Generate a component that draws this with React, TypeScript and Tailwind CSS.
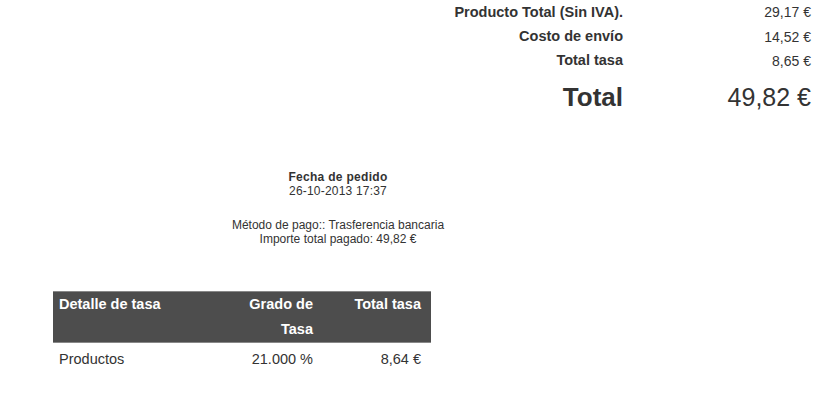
export default function App() {
  return (
    <div
      className="w-[827px] h-[400px] bg-white text-[#333] overflow-hidden"
      style={{ fontFamily: '"Liberation Sans", Arial, sans-serif' }}
    >
      <div className="flex justify-end pr-[16px]">
        <table className="border-collapse">
          <tbody>
            <tr className="h-[25px]">
              <td className="text-right font-bold text-[14.5px] pr-0">Producto Total (Sin IVA).</td>
              <td className="text-right text-[14px] w-[188px]">29,17 €</td>
            </tr>
            <tr className="h-[24px]">
              <td className="text-right font-bold text-[14.5px]">Costo de envío</td>
              <td className="text-right text-[14px]">14,52 €</td>
            </tr>
            <tr className="h-[24px]">
              <td className="text-right font-bold text-[14.5px]">Total tasa</td>
              <td className="text-right text-[14px]">8,65 €</td>
            </tr>
            <tr className="h-[49px]">
              <td className="text-right font-bold text-[26px]">Total</td>
              <td className="text-right text-[25px]">49,82 €</td>
            </tr>
          </tbody>
        </table>
      </div>

      <div className="w-[676px] flex flex-col items-center mt-[48px] text-[12px] leading-[14px]">
        <div className="font-bold tracking-[0.3px]">Fecha de pedido</div>
        <div className="tracking-[0.2px]">26-10-2013 17:37</div>
        <div className="mt-[20px]">Método de pago:: Trasferencia bancaria</div>
        <div>Importe total pagado: 49,82 €</div>
      </div>

      <div className="ml-[53px] mt-[45px] w-[378px]">
        <table className="w-full border-collapse text-[14.5px]">
          <thead>
            <tr className="bg-[#4d4d4d] text-white align-top border-y border-[#888]">
              <th className="text-left pl-[6px] leading-[25px] font-bold">Detalle de tasa</th>
              <th className="text-right w-[90px] leading-[25px] font-bold">
                Grado de<br />Tasa
              </th>
              <th className="text-right w-[118px] pr-[10px] leading-[25px] font-bold">Total tasa</th>
            </tr>
          </thead>
          <tbody>
            <tr className="h-[34px]">
              <td className="pl-[6px]">Productos</td>
              <td className="text-right">21.000 %</td>
              <td className="text-right pr-[10px]">8,64 €</td>
            </tr>
          </tbody>
        </table>
      </div>
    </div>
  );
}
